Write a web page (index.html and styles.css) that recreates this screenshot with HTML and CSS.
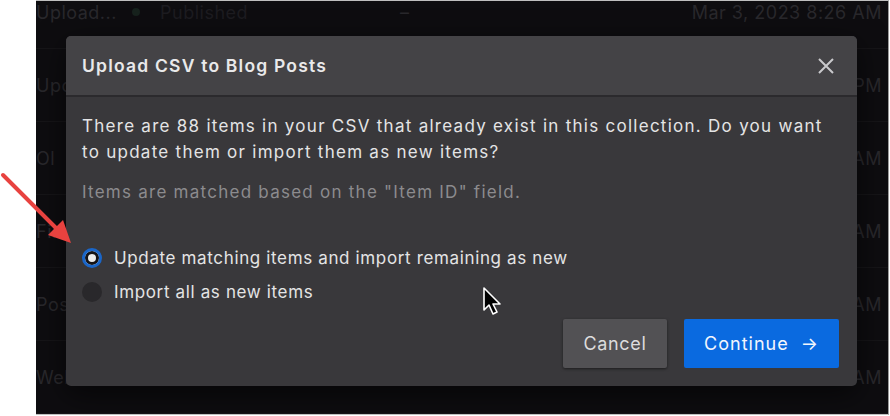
FILE: index.html
```html
<!DOCTYPE html>
<html lang="en">
<head>
  <meta charset="UTF-8" />
  <title>Upload CSV to Blog Posts</title>
  <link rel="stylesheet" href="styles.css">
</head>
<body>
  <div class="frame">
    <div class="table">
      <div class="row"><span class="cell name">Upload...</span><span class="dot"></span><span class="cell status">Published</span><span class="cell dash">–</span><span class="cell date">Mar 3, 2023 8:26 AM</span></div>
      <div class="row"><span class="cell name">Upod</span><span class="cell date">PM</span></div>
      <div class="row"><span class="cell name">Ol</span><span class="cell date">AM</span></div>
      <div class="row"><span class="cell name">Fir</span><span class="cell date">AM</span></div>
      <div class="row"><span class="cell name">Post</span><span class="cell date">AM</span></div>
      <div class="row"><span class="cell name">Web</span><span class="cell date">AM</span></div>
    </div>

    <div class="modal">
      <div class="modal-header">
        <h2>Upload CSV to Blog Posts</h2>
        <svg class="close" width="18" height="18" viewBox="0 0 18 18"><path d="M2 2 L16 16 M16 2 L2 16" stroke="#c9c9cc" stroke-width="2" fill="none"/></svg>
      </div>
      <div class="modal-body">
        <p class="lead">There are 88 items in your CSV that already exist in this collection. Do you want to update them or import them as new items?</p>
        <p class="hint">Items are matched based on the "Item ID" field.</p>
        <div class="options">
          <label class="option"><span class="radio checked"></span>Update matching items and import remaining as new</label>
          <label class="option"><span class="radio"></span>Import all as new items</label>
        </div>
        <div class="actions">
          <button class="btn cancel">Cancel</button>
          <button class="btn continue">Continue <span class="arrow">→</span></button>
        </div>
      </div>
    </div>
  </div>

  <svg class="red-arrow" width="80" height="80" viewBox="0 0 80 80">
    <path d="M3 3 L58 58" stroke="#e8423f" stroke-width="4" stroke-linecap="round"/>
    <path d="M71 71 L48 63 L63 48 Z" fill="#e8423f"/>
  </svg>
  <svg class="cursor" width="22" height="30" viewBox="0 0 22 30">
    <path d="M2 2 L2 24 L7 19 L11 28 L15 26 L11 18 L18 18 Z" fill="#000" stroke="#fff" stroke-width="1.6" stroke-linejoin="round"/>
  </svg>
</body>
</html>
```
FILE: styles.css
```css
body {
  margin: 0;
  background: #ffffff;
  font-family: 'Inter', 'Liberation Sans', sans-serif;
}
.frame {
  position: relative;
  margin-left: 36px;
  width: 852px;
  height: 413px;
  background: #0e0d10;
  border-top: 1px solid #bfbfbf;
  border-bottom: 1px solid #bfbfbf;
  border-right: 1px solid #9a9a9a;
  overflow: hidden;
}
.table {
  margin-top: -25px;
}
.row {
  display: flex;
  align-items: center;
  height: 72px;
  border-bottom: 1px solid #161518;
  color: #29282c;
  font-size: 18px;
  letter-spacing: 0.5px;
}
.cell.name {
  width: 90px;
}
.dot {
  width: 8px;
  height: 8px;
  border-radius: 50%;
  background: #17221d;
  margin: 0 20px 0 6px;
}
.cell.status {
  width: 240px;
  color: #1d1c20;
}
.cell.dash {
  width: 20px;
}
.cell.date {
  margin-left: auto;
  padding-right: 6px;
}
.modal {
  position: absolute;
  left: 30px;
  top: 35px;
  width: 791px;
  height: 350px;
  background: #39383b;
  border-radius: 5px;
  box-shadow: 0 8px 30px rgba(0, 0, 0, 0.6);
  overflow: hidden;
}
.modal-header {
  height: 59px;
  display: flex;
  align-items: center;
  justify-content: space-between;
  padding: 0 22px 0 16px;
  background: #444346;
  border-bottom: 2px solid #2b2a2d;
}
.modal-header h2 {
  margin: 0;
  font-size: 17.5px;
  font-weight: 600;
  letter-spacing: 1.2px;
  color: #e9e9ea;
}
.modal-body {
  padding: 16px 18px 17px 16px;
}
.lead {
  margin: 0;
  font-size: 17px;
  line-height: 26px;
  letter-spacing: 1.27px;
  color: #e4e4e5;
}
.hint {
  margin: 14px 0 0;
  font-size: 17px;
  line-height: 26px;
  letter-spacing: 1.25px;
  color: #8c8b8e;
}
.options {
  margin-top: 40px;
  display: flex;
  flex-direction: column;
  gap: 8px;
}
.option {
  display: flex;
  align-items: center;
  gap: 12px;
  font-size: 17px;
  line-height: 26px;
  letter-spacing: 0.64px;
  color: #e4e4e5;
}
.radio {
  width: 20px;
  height: 20px;
  border-radius: 50%;
  background: #29282b;
  box-sizing: border-box;
}
.radio.checked {
  background: #ececec;
  border: 3px solid #1a66c9;
  box-shadow: inset 0 0 0 3px #141316;
}
.actions {
  display: flex;
  justify-content: flex-end;
  gap: 17px;
  margin-top: 14px;
}
.btn {
  height: 49px;
  border: none;
  border-radius: 2px;
  font-family: 'Inter', 'Liberation Sans', sans-serif;
  font-size: 18px;
  cursor: pointer;
}
.btn.cancel {
  width: 104px;
  background: #525154;
  color: #dcdcdd;
  letter-spacing: 0.7px;
  box-shadow: 0 1px 3px rgba(0, 0, 0, 0.5);
}
.btn.continue {
  width: 155px;
  background: #0a6ae0;
  color: #f2f6fd;
  letter-spacing: 1px;
}
.btn .arrow {
  margin-left: 6px;
}
.red-arrow {
  position: absolute;
  left: 0;
  top: 172px;
}
.cursor {
  position: absolute;
  left: 482px;
  top: 286px;
}
```
